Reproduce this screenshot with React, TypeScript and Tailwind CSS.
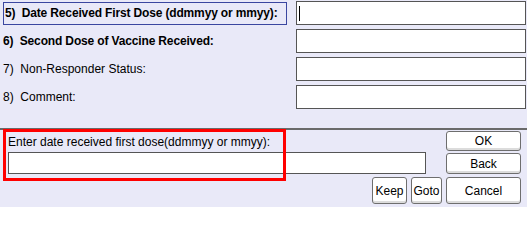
const font = { fontFamily: '"Liberation Sans", Arial, sans-serif' };

const rows = [
  { label: '5)  Date Received First Dose (ddmmyy or mmyy):', bold: true, active: true },
  { label: '6)  Second Dose of Vaccine Received:', bold: true, active: false },
  { label: '7)  Non-Responder Status:', bold: false, active: false },
  { label: '8)  Comment:', bold: false, active: false },
];

const Button = ({ label, className }: { label: string; className: string }) => (
  <button
    className={`flex items-center justify-center rounded-[3px] border border-[#6e6e6e] bg-white text-[12px] text-black shadow-[inset_0_-2px_0_#dcdcdc] ${className}`}
  >
    {label}
  </button>
);

export default function App() {
  return (
    <div className="relative h-[207px] w-[527px] overflow-hidden bg-[#e9e9f8]" style={font}>
      <div className="flex flex-col gap-[4px] pl-[3px] pr-[1px] pt-[1px]">
        {rows.map((row) => (
          <div key={row.label} className="flex h-[24px] items-center">
            <div
              className={`flex h-[23px] w-[284px] items-center whitespace-pre text-[12px] text-black ${
                row.bold ? 'font-bold tracking-[-0.15px]' : 'font-normal text-[#1a1a1a]'
              } ${row.active ? 'border border-[#3a46a0] pl-[1px]' : ''}`}
            >
              {row.label}
            </div>
            <div className="ml-[9px] flex h-[24px] flex-1 items-center border border-[#555555] bg-white pl-[2px]">
              {row.active && <div className="h-[15px] w-px bg-black" />}
            </div>
          </div>
        ))}
      </div>

      <div className="mt-[19px] h-[2px] w-full bg-[#6a6a6a]" />

      <div className="flex pl-[8px] pr-[6px] pt-[1px]">
        <div className="flex w-[418px] flex-col">
          <div className="flex h-[21px] items-end pb-[1px] text-[12px] text-black">
            Enter date received first dose(ddmmyy or mmyy):
          </div>
          <div className="h-[22px] border border-[#555555] bg-white" />
        </div>
        <div className="ml-[20px] flex flex-1 flex-col gap-[2px]">
          <Button label="OK" className="h-[20px] w-full" />
          <Button label="Back" className="h-[21px] w-full" />
        </div>
      </div>
      <div className="flex justify-end gap-[4px] pr-[6px] pt-[3px]">
        <Button label="Keep" className="h-[27px] w-[35px]" />
        <Button label="Goto" className="h-[27px] w-[31px]" />
        <Button label="Cancel" className="h-[27px] w-[75px]" />
      </div>

      <div className="pointer-events-none absolute left-[3px] top-[129px] h-[52px] w-[283px] border-[3px] border-[#ff0000]" />
    </div>
  );
}
